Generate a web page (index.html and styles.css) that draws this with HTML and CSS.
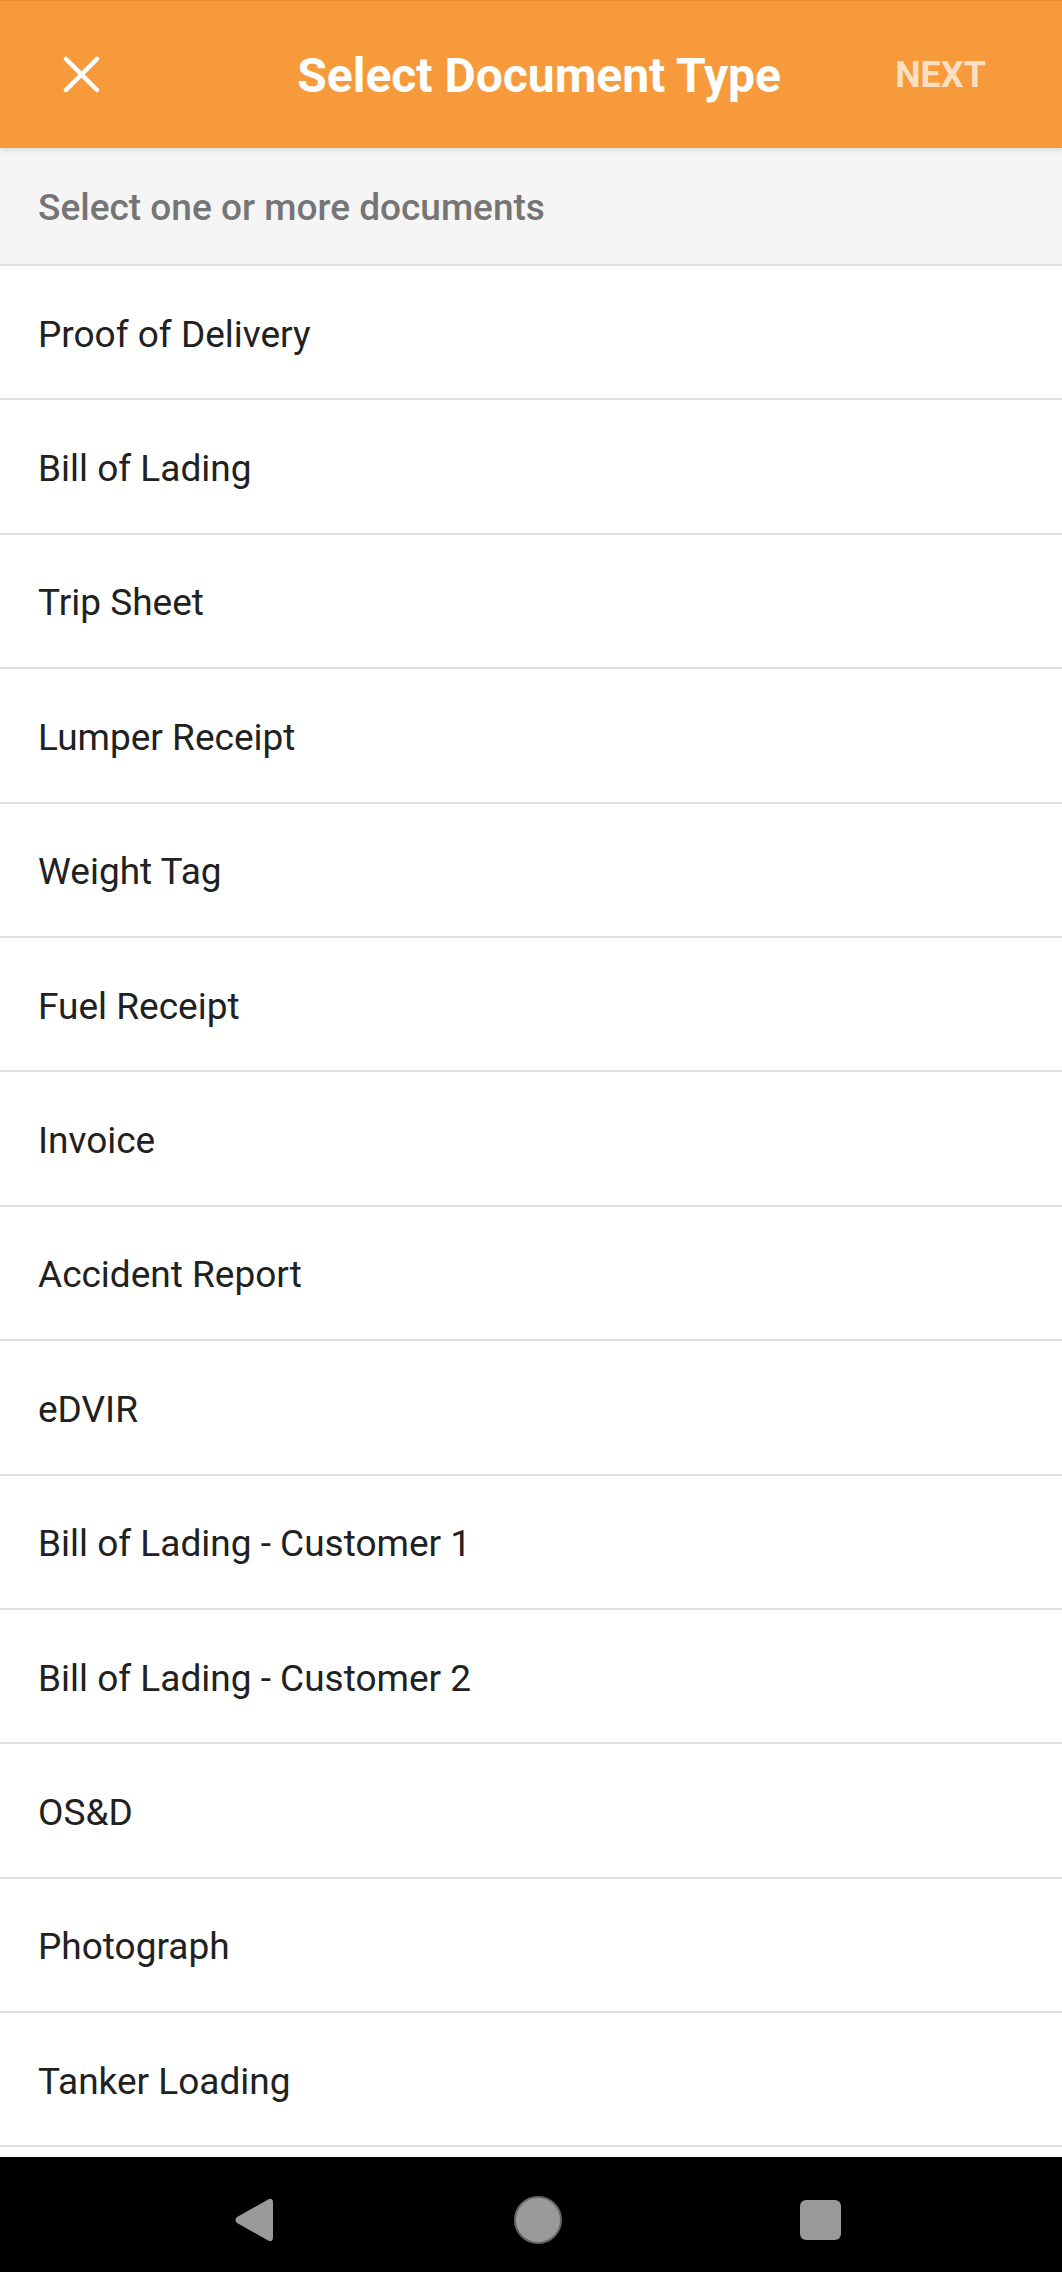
FILE: index.html
```html
<!DOCTYPE html>
<html lang="en">
<head>
  <meta charset="UTF-8">
  <title>Select Document Type</title>
  <link rel="stylesheet" href="styles.css">
</head>
<body>
  <div class="screen">
    <div class="toolbar">
      <button class="close-btn" aria-label="Close">
        <svg width="37" height="37" viewBox="0 0 37 37">
          <path d="M3 3 L34 34 M34 3 L3 34" stroke="#fff" stroke-width="4.5" stroke-linecap="round" fill="none"/>
        </svg>
      </button>
      <h1 class="title">Select Document Type</h1>
      <span class="next">NEXT</span>
    </div>
    <div class="subheader">Select one or more documents</div>
    <ul class="doc-list">
      <li>Proof of Delivery</li>
      <li>Bill of Lading</li>
      <li>Trip Sheet</li>
      <li>Lumper Receipt</li>
      <li>Weight Tag</li>
      <li>Fuel Receipt</li>
      <li>Invoice</li>
      <li>Accident Report</li>
      <li>eDVIR</li>
      <li>Bill of Lading - Customer 1</li>
      <li>Bill of Lading - Customer 2</li>
      <li>OS&amp;D</li>
      <li>Photograph</li>
      <li>Tanker Loading</li>
    </ul>
    <div class="navbar">
      <svg class="nav-back" width="40" height="44" viewBox="0 0 40 44">
        <path d="M35 1 Q39 0 39 5 L39 39 Q39 44 35 43 L3 25 Q0 22 3 19 Z" fill="#9a9a9a"/>
      </svg>
      <span class="nav-home"></span>
      <span class="nav-recent"></span>
    </div>
  </div>
</body>
</html>
```

FILE: styles.css
```css
body { margin: 0; font-family: Roboto, "Noto Sans", sans-serif; background: #fff; }
.screen { height: 2272px; display: flex; flex-direction: column; overflow: hidden; }

.toolbar { height: 147px; flex: none; display: flex; align-items: center; background: #f79a3b; border-top: 1px solid #e88b30; box-shadow: 0 2px 5px rgba(0,0,0,0.12); position: relative; z-index: 1; }
.close-btn { margin-left: 63px; padding: 0; border: none; background: none; width: 37px; height: 37px; display: flex; }
.title { flex: 1; margin: 2px 0 0 83px; text-align: center; color: #fff; font-size: 48px; font-weight: 700; line-height: 1; }
.next { margin-right: 76px; color: rgba(255,255,255,0.7); font-size: 36px; font-weight: 700; line-height: 1; }

.subheader { flex: none; height: 116px; box-sizing: border-box; display: flex; align-items: center; padding: 3px 0 0 38px; background: #f5f5f5; color: #757575; font-size: 37px; font-weight: 500; border-bottom: 2px solid #e0e0e0; height: 118px; }

.doc-list { flex: 1; margin: 0; padding: 0; list-style: none; overflow: hidden; }
.doc-list li { height: 134.4px; box-sizing: border-box; display: flex; align-items: center; padding: 4px 0 0 38px; color: #212121; font-size: 37px; border-bottom: 2px solid #e0e0e0; }

.navbar { height: 115px; flex: none; background: #000; display: flex; align-items: center; gap: 240px; padding: 10px 0 0 234px; box-sizing: border-box; }
.nav-back { display: block; }
.nav-home { width: 44px; height: 44px; border-radius: 50%; background: #9a9a9a; border: 2px solid #666; }
.nav-recent { width: 41px; height: 40px; border-radius: 6px; background: #999; margin-left: -2px; }
```
